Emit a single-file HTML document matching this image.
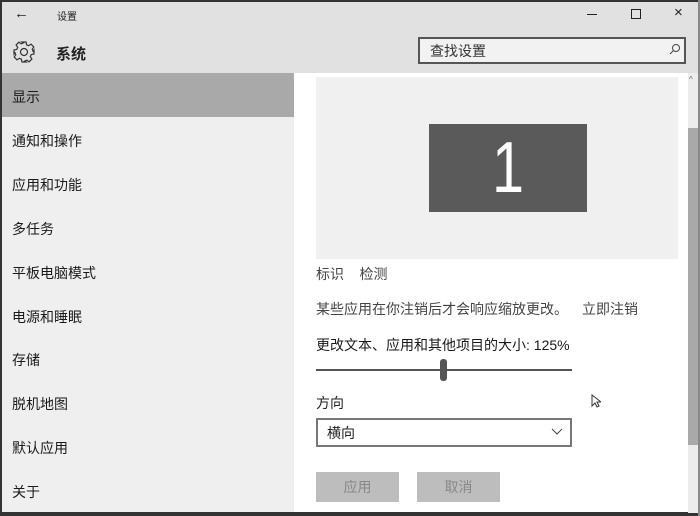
<!DOCTYPE html>
<html><head><meta charset="utf-8"><style>
*{margin:0;padding:0;box-sizing:border-box}
body{width:700px;height:516px;overflow:hidden;background:#fff;font-family:"Liberation Sans","Noto Sans CJK SC",sans-serif;color:#222;position:relative}
.a{position:absolute}
.side{left:0;top:73px;width:294px;height:440px;background:#efefef}
.it{position:absolute;left:12px;font-size:14px;color:#1a1a1a}
</style></head><body>
<div class="a" style="left:0;top:0;width:700px;height:73px;background:#e1e1e1"></div>
<div class="a side"></div>
<div class="a" style="left:0;top:73px;width:294px;height:44px;background:#a9a9a9"></div>
<div class="a" style="left:0;top:0;width:700px;height:2px;background:#333"></div>
<div class="a" style="left:0;top:0;width:2px;height:516px;background:#333"></div>
<div class="a" style="left:0;top:512px;width:700px;height:4px;background:#333"></div>
<div class="a" style="left:698px;top:0;width:2px;height:516px;background:#888"></div>
<div class="a" style="left:14px;top:5px;font-size:15px">←</div>
<div class="a" style="left:57px;top:8px;font-size:10px">设置</div>
<div class="a" style="left:587px;top:14px;width:10px;height:1px;background:#222"></div>
<div class="a" style="left:631px;top:9px;width:10px;height:10px;border:1px solid #222"></div>
<div class="a" style="left:674px;top:4px;font-size:15px;color:#222">×</div>
<svg class="a" style="left:12px;top:40px" width="24" height="24" viewBox="0 0 24 24" fill="none" stroke="#333" stroke-width="1.2"><circle cx="12" cy="12" r="3.5"/><path d="M10 2h4l.6 2.8 2 .9 2.4-1.6 2.8 2.8-1.6 2.4.9 2L22 10v4l-2.8.6-.9 2 1.6 2.4-2.8 2.8-2.4-1.6-2 .9L14 22h-4l-.6-2.8-2-.9-2.4 1.6-2.8-2.8 1.6-2.4-.9-2L2 14v-4l2.8-.6.9-2-1.6-2.4 2.8-2.8 2.4 1.6 2-.9z"/></svg>
<div class="a" style="left:56px;top:43px;font-size:15px;font-weight:bold">系统</div>
<div class="a" style="left:418px;top:37px;width:268px;height:27px;border:2px solid #555;background:#f2f2f2"></div>
<div class="a" style="left:430px;top:41px;font-size:14px;color:#333">查找设置</div>
<svg class="a" style="left:669px;top:43px" width="12" height="12" viewBox="0 0 12 12" fill="none" stroke="#444"><circle cx="7" cy="5" r="3.5"/><path d="M4.5 7.5L1 11"/></svg>
<div class="it" style="top:87px">显示</div>
<div class="it" style="top:131px">通知和操作</div>
<div class="it" style="top:175px">应用和功能</div>
<div class="it" style="top:219px">多任务</div>
<div class="it" style="top:263px">平板电脑模式</div>
<div class="it" style="top:307px">电源和睡眠</div>
<div class="it" style="top:350px">存储</div>
<div class="it" style="top:394px">脱机地图</div>
<div class="it" style="top:438px">默认应用</div>
<div class="it" style="top:482px">关于</div>
<div class="a" style="left:316px;top:77px;width:362px;height:182px;background:#f0f0f0"></div>
<div class="a" style="left:429px;top:124px;width:158px;height:88px;background:#5a5a5a"></div>
<div class="a" style="left:429px;top:124px;width:158px;height:88px;color:#fff;font-size:72px;text-align:center;line-height:88px;transform:scaleX(0.8)">1</div>
<div class="a" style="left:688px;top:73px;width:10px;height:440px;background:#ececec"></div>
<div class="a" style="left:688px;top:128px;width:10px;height:317px;background:#a9a9a9"></div>
<div class="a" style="left:689px;top:75px;font-size:8px;color:#666">^</div>
<div class="a" style="left:316px;top:264px;font-size:14px;color:#444">标识&nbsp;&nbsp;&nbsp;&nbsp;检测</div>
<div class="a" style="left:316px;top:299px;font-size:14px;color:#444">某些应用在你注销后才会响应缩放更改。</div>
<div class="a" style="left:582px;top:299px;font-size:14px;color:#444">立即注销</div>
<div class="a" style="left:316px;top:335px;font-size:14px;color:#1a1a1a">更改文本、应用和其他项目的大小: 125%</div>
<div class="a" style="left:316px;top:369px;width:256px;height:2px;background:#555"></div>
<div class="a" style="left:440px;top:359px;width:7px;height:22px;border-radius:3px;background:#555"></div>
<div class="a" style="left:316px;top:393px;font-size:14px">方向</div>
<div class="a" style="left:316px;top:418px;width:256px;height:29px;border:2px solid #777;background:#fff"></div>
<div class="a" style="left:327px;top:423px;font-size:14px">横向</div>
<svg class="a" style="left:551px;top:428px" width="12" height="8" viewBox="0 0 12 8"><path d="M1 1l5 5 5-5" fill="none" stroke="#444"/></svg>
<div class="a" style="left:316px;top:472px;width:83px;height:30px;background:#bdbdbd;color:#888;font-size:14px;text-align:center;line-height:30px">应用</div>
<div class="a" style="left:417px;top:472px;width:83px;height:30px;background:#bdbdbd;color:#888;font-size:14px;text-align:center;line-height:30px">取消</div>
<svg class="a" style="left:591px;top:394px" width="10" height="15" viewBox="0 0 10 15"><path d="M1 1v11l3-3 2 4 2-1-2-4h4z" fill="#fff" stroke="#333"/></svg>
</body></html>
